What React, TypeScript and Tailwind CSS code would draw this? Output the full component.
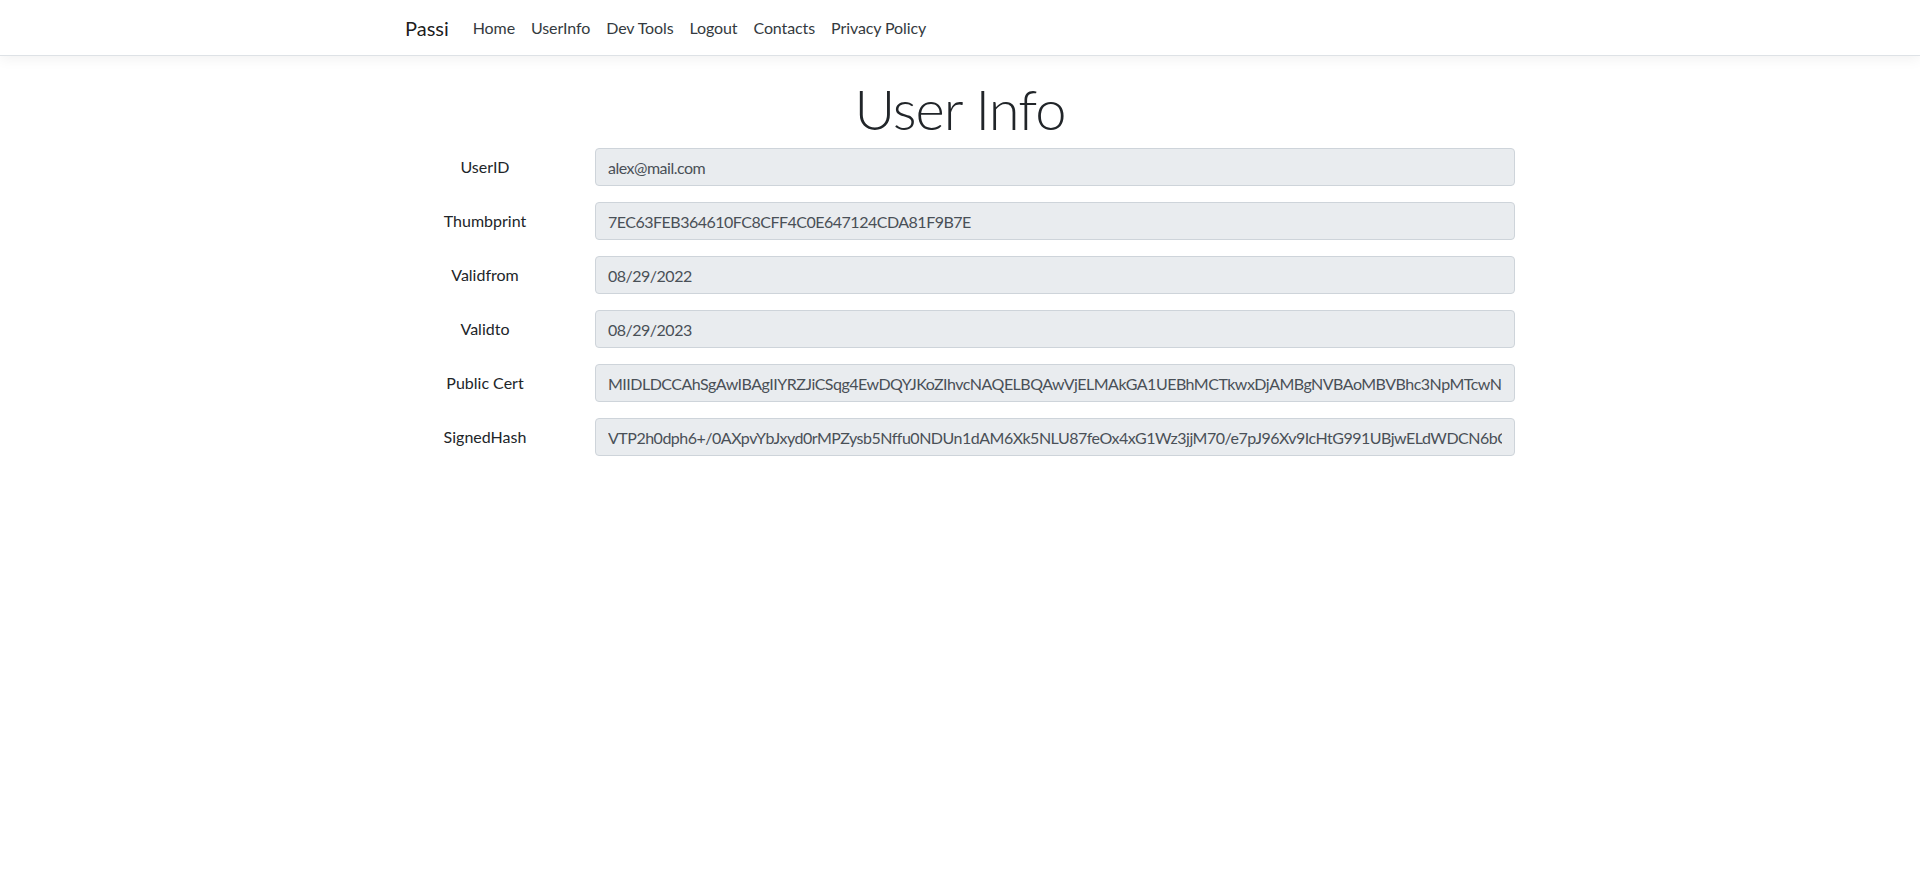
import React from 'react';

// Liens de la barre de navigation
const navLinks = ['Home', 'UserInfo', 'Dev Tools', 'Logout', 'Contacts', 'Privacy Policy'];

// Champs du certificat
const fields = [
  { label: 'UserID', value: 'alex@mail.com' },
  { label: 'Thumbprint', value: '7EC63FEB364610FC8CFF4C0E647124CDA81F9B7E' },
  { label: 'Validfrom', value: '08/29/2022' },
  { label: 'Validto', value: '08/29/2023' },
  {
    label: 'Public Cert',
    value:
      'MIIDLDCCAhSgAwIBAgIIYRZJiCSqg4EwDQYJKoZIhvcNAQELBQAwVjELMAkGA1UEBhMCTkwxDjAMBgNVBAoMBVBhc3NpMTcwNQYDVQQDDC5QYXNzaSBJbnRlcm1lZGlhdGUgQ2VydGlmaWNhdGUgQXV0aG9yaXR5',
  },
  {
    label: 'SignedHash',
    value:
      'VTP2h0dph6+/0AXpvYbJxyd0rMPZysb5Nffu0NDUn1dAM6Xk5NLU87feOx4xG1Wz3jjM70/e7pJ96Xv9IcHtG991UBjwELdWDCN6bQk2yF0pL8rVx3aHcT1mEo9Zs4uN7gKd',
  },
];

export default function App() {
  return (
    <div className="min-h-screen bg-white text-[#212529] font-['Lato','Open_Sans',sans-serif] text-[16px]">
      <header className="border-b border-[#dee2e6] shadow-[0_4px_12px_rgba(0,0,0,0.05)] mb-4">
        <nav className="h-[55px] w-[1140px] mx-auto px-[15px] flex items-center">
          <a className="text-[20px] text-black/90 mr-[16px] leading-none">Passi</a>
          <ul className="flex items-center">
            {navLinks.map((link) => (
              <li key={link}>
                <a className="block px-2 py-2 text-[#343a40] tracking-[-0.1px]">{link}</a>
              </li>
            ))}
          </ul>
        </nav>
      </header>

      <main className="w-[1140px] mx-auto px-[15px]">
        <h1 className="text-center text-[56px] font-light leading-[1.2] pt-[3px] mb-[6px] tracking-[-1px]">
          User Info
        </h1>
        {fields.map((field) => (
          <div key={field.label} className="flex -mx-[15px] mb-4">
            <label className="w-[190px] px-[15px] pt-[7px] text-center leading-6">{field.label}</label>
            <div className="w-[950px] px-[15px]">
              <input
                readOnly
                value={field.value}
                className="w-full h-[38px] px-3 bg-[#e9ecef] border border-[#ced4da] rounded text-[#495057] tracking-[-0.5px] outline-none"
              />
            </div>
          </div>
        ))}
      </main>
    </div>
  );
}
